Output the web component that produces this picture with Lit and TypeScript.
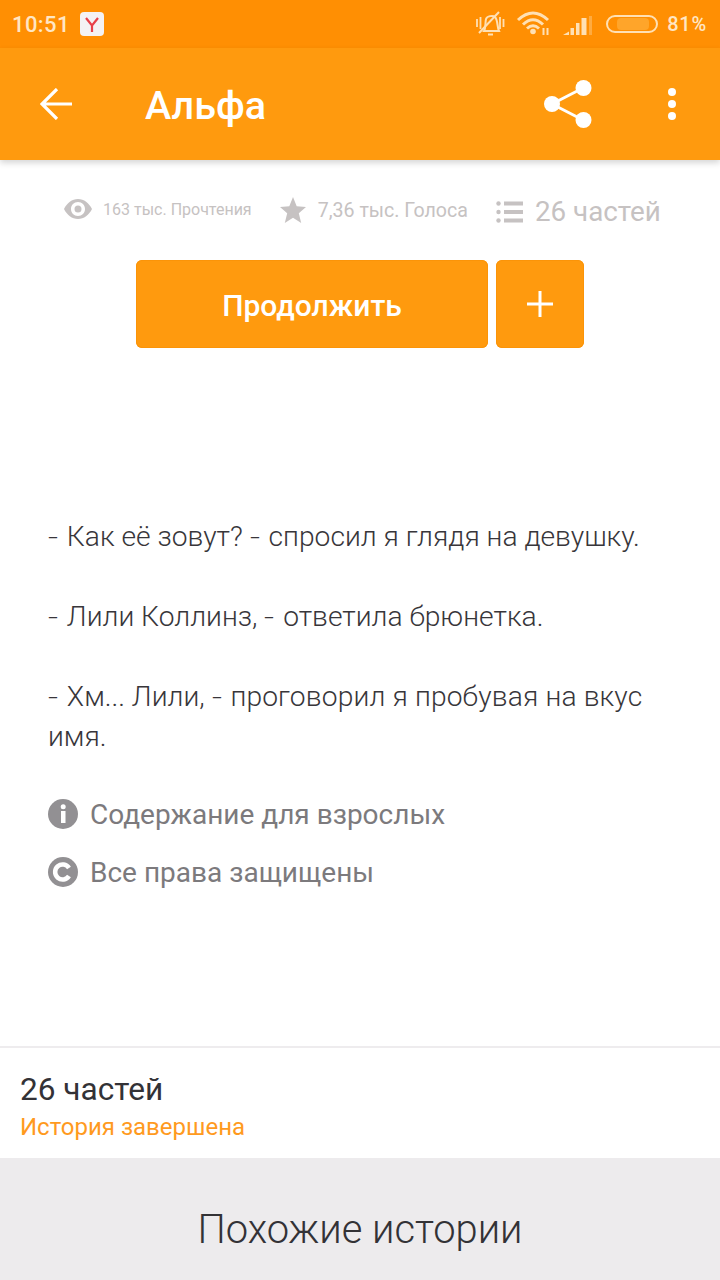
import { LitElement, html, css } from "lit";
import { customElement } from "lit/decorators.js";

@customElement("app-root")
export class AppRoot extends LitElement {
  static styles = css`
    :host { display: block; width: 720px; height: 1280px; overflow: hidden; background: #fff; font-family: Roboto, "Noto Sans", sans-serif; position: relative; }
    .status { height: 48px; background: #ff8f03; display: flex; align-items: center; color: #ffe6c4; padding: 0 13px 0 12px; box-sizing: border-box; }
    .time { font-size: 22px; font-weight: 500; letter-spacing: 0.4px; width: 68px; }
    .ya { width: 24px; height: 24px; border-radius: 4px; background: #f4f2f4; display: flex; align-items: center; justify-content: center; }
    .spacer { flex: 1; }
    .stat-icons { display: flex; align-items: center; }
    .batt { margin-left: 10px; }
    .pct { font-size: 20px; font-weight: 500; letter-spacing: 0.8px; margin-left: 8px; }
    .bar { height: 112px; background: #ff9a0e; display: flex; align-items: center; box-shadow: 0 3px 6px rgba(0,0,0,.16); position: relative; color: #fff; }
    .back { width: 145px; display: flex; padding-left: 40px; box-sizing: border-box; }
    .title { font-size: 39.5px; font-weight: 500; flex: 1; line-height: 1; padding-top: 3px; }
    .share { margin-right: 76px; display: flex; }
    .dots { margin-right: 44px; display: flex; }
    .stats { display: flex; align-items: center; height: 100px; padding-left: 64px; color: #c6c2c2; }
    .eye { margin-bottom: 2px; }
    .s1 { font-size: 16px; margin-left: 11px; margin-right: 28px; margin-bottom: 2px; }
    .star { margin-bottom: 1px; }
    .s2 { font-size: 19.6px; margin-left: 12px; margin-right: 28px; }
    .list { margin-top: 3px; }
    .s3 { font-size: 27.8px; margin-left: 12px; margin-top: 3px; }
    .btns { display: flex; gap: 8px; padding-left: 136px; }
    .btn { height: 88px; background: #ff9a0e; border-radius: 6px; color: #fff; display: flex; align-items: center; justify-content: center; box-shadow: inset 0 0 0 1px #fb9408; }
    .main { width: 352px; font-size: 30px; font-weight: 500; padding-top: 2px; box-sizing: border-box; }
    .plus { width: 88px; }
    .text { margin: 169px 0 0 48px; width: 630px; font-size: 28.2px; font-weight: 300; line-height: 40px; color: #38363a; }
    .text p { margin: 0 0 40px; }
    .text p:last-child { margin-bottom: 0; }
    .h { display: inline-block; width: 12px; transform: scaleX(1.25); transform-origin: left center; }
    .wide { letter-spacing: 0.14px; }
    .meta { margin: 28px 0 0 48px; color: #7c7a7d; font-size: 28px; }
    .row { display: flex; align-items: center; gap: 12px; height: 58px; }
    .parts { margin-top: 145px; border-top: 2px solid #eeecee; height: 112px; padding: 22px 0 0 20px; box-sizing: border-box; }
    .p1 { font-size: 31.6px; color: #333236; line-height: 40px; }
    .p2 { font-size: 24px; color: #ff9a1e; line-height: 36px; margin-top: -1px; }
    .similar { height: 122px; background: #edebed; display: flex; align-items: center; justify-content: center; font-size: 39.9px; font-weight: 300; color: #333236; padding-top: 20px; box-sizing: border-box; }
  `;

  render() {
    return html`
      <div class="status">
        <span class="time">10:51</span>
        <span class="ya"><svg width="18" height="18" viewBox="0 0 18 18"><path d="M3 3l6 7.500 6-7.500M9 10v7" fill="none" stroke="#e8404a" stroke-width="2.200"/></svg></span>
        <span class="spacer"></span>
        <span class="stat-icons">
          <svg width="119" height="34" viewBox="0 0 119 34" fill="none" stroke="#ffe0b4">
            <path d="M1 12v8M4.500 10v12M24 10v12M27.500 12v8" stroke-width="1.800"/>
            <path d="M8 24c2-3 1-8 2-12 1-3 7-4 9-2 3 3 2 10 4 14zM12 27.500h5" stroke-width="2"/>
            <path d="M3 26L23 5" stroke-width="2"/>
            <path d="M42 13Q57-1 72 13M47 17.500Q57 8 67 17.500M51 21.500Q57 16 63 21.500" stroke-width="3"/>
            <circle cx="57" cy="24.500" r="2.800" fill="#ffe0b4" stroke="none"/>
            <path d="M67.500 21v7M71.500 21v7" stroke-width="2"/>
            <g fill="#ffe0b4" stroke="none">
              <path d="M87 28l6-3.500V28z"/>
              <rect x="94.500" y="21" width="3.500" height="7"/>
              <rect x="100" y="16" width="3.500" height="12"/>
              <rect x="105.500" y="11" width="5" height="17"/>
              <rect x="113" y="9" width="3" height="19" opacity=".35"/>
            </g>
          </svg>
          <svg class="batt" width="54" height="22" viewBox="0 0 54 22">
            <rect x="2" y="3" width="50" height="16" rx="8" fill="none" stroke="#ffe0b4" stroke-width="2"/>
            <rect x="12" y="5" width="32" height="12" rx="4" fill="#ffa52a"/>
          </svg>
          <span class="pct">81%</span>
        </span>
      </div>
      <div class="bar">
        <span class="back"><svg width="32" height="32" viewBox="0 0 32 32" fill="none" stroke="#fff" stroke-width="3.200"><path d="M32 16H2M17 1L2 16l15 15"/></svg></span>
        <span class="title">Альфа</span>
        <span class="share"><svg width="48" height="48" viewBox="0 0 48 48" fill="#fff"><circle cx="8" cy="24" r="8"/><circle cx="39.500" cy="8" r="8"/><circle cx="39.500" cy="40" r="8"/><path d="M8 24L39 8M8 24l31 16" stroke="#fff" stroke-width="3"/></svg></span>
        <span class="dots"><svg width="8" height="34" viewBox="0 0 8 34" fill="#fff"><circle cx="4" cy="5" r="4"/><circle cx="4" cy="17" r="4"/><circle cx="4" cy="29" r="4"/></svg></span>
      </div>
      <div class="stats">
        <svg class="eye" width="28" height="20" viewBox="0 0 28 20"><path fill-rule="evenodd" fill="#c6c2c2" d="M14 0C8 0 3 4 0 10c3 6 8 10 14 10s11-4 14-10C25 4 20 0 14 0zm0 3c4 0 7 3 7 7s-3 7-7 7-7-3-7-7 3-7 7-7zm0 3.500a3.500 3.500 0 100 7 3.500 3.500 0 000-7z"/></svg>
        <span class="s1">163 тыс. Прочтения</span>
        <svg class="star" width="26" height="26" viewBox="0 0 26 26"><path fill="#c6c2c2" d="M13 0l3.700 9.300 9.300.6-7.200 6.300 2.400 9.800L13 20.700 4.800 26l2.400-9.800L0 9.900l9.300-.6z"/></svg>
        <span class="s2">7,36 тыс. Голоса</span>
        <svg class="list" width="27" height="22" viewBox="0 0 27 22" fill="#c6c2c2"><circle cx="2.500" cy="2.500" r="2.200"/><circle cx="2.500" cy="11" r="2.200"/><circle cx="2.500" cy="19.500" r="2.200"/><rect x="8" y="0.500" width="19" height="4"/><rect x="8" y="9" width="19" height="4"/><rect x="8" y="17.500" width="19" height="4"/></svg>
        <span class="s3">26 частей</span>
      </div>
      <div class="btns">
        <div class="btn main">Продолжить</div>
        <div class="btn plus"><svg width="26" height="26" viewBox="0 0 26 26" stroke="#fff" stroke-width="3"><path d="M13 0v26M0 13h26"/></svg></div>
      </div>
      <div class="text">
        <p><span class="h">-</span> Как её зовут? <span class="h">-</span> спросил я глядя на девушку.</p>
        <p><span class="h">-</span> Лили Коллинз, <span class="h">-</span> ответила брюнетка.</p>
        <p><span class="h">-</span> Хм... Лили, <span class="h">-</span> <span class="wide">проговорил я пробувая на вкус</span><br>имя.</p>
      </div>
      <div class="meta">
        <div class="row">
          <svg width="30" height="30" viewBox="0 0 30 30"><circle cx="15" cy="15" r="15" fill="#929093"/><rect x="13" y="12" width="4.500" height="12" fill="#fff"/><circle cx="15.200" cy="7.800" r="2.500" fill="#fff"/></svg>
          <span>Содержание для взрослых</span>
        </div>
        <div class="row">
          <svg width="30" height="30" viewBox="0 0 30 30"><circle cx="15" cy="15" r="15" fill="#929093"/><path d="M21 11a7.500 7.500 0 100 8" fill="none" stroke="#fff" stroke-width="4.500"/></svg>
          <span>Все права защищены</span>
        </div>
      </div>
      <div class="parts">
        <div class="p1">26 частей</div>
        <div class="p2">История завершена</div>
      </div>
      <div class="similar">Похожие истории</div>
    `;
  }
}
